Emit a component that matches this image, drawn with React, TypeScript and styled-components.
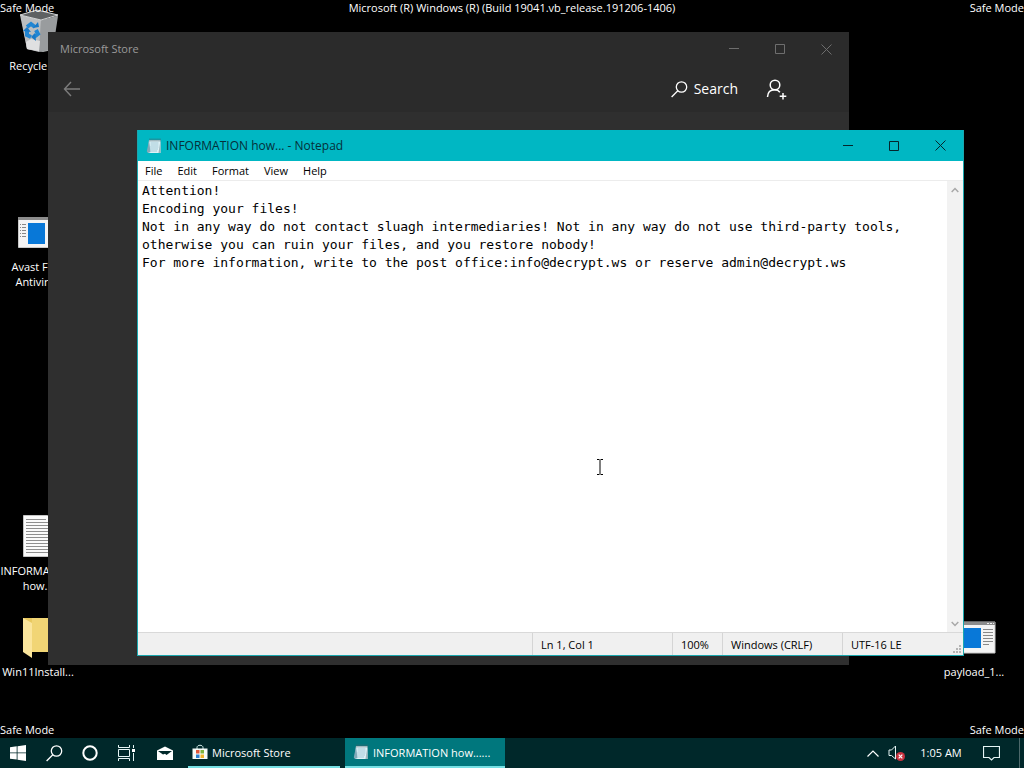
import React from "react";
import styled, { createGlobalStyle, css } from "styled-components";

const GlobalStyle = createGlobalStyle`
  *, *::before, *::after { box-sizing: border-box; }
  body { margin: 0; background: #000; }
  body, button, textarea { font-family: "Open Sans", "Noto Sans", sans-serif; font-size: 11px; }
  button { border: 0; padding: 0; margin: 0; background: none; color: inherit; }
  svg { display: block; flex: none; }
`;

const Screen = styled.div`
  display: flex;
  flex-direction: column;
  height: 100vh;
  min-height: 480px;
  overflow: hidden;
  background: #000;
  color: #fff;
`;

const Desktop = styled.main`
  position: relative;
  flex: 1;
  min-height: 0;
  overflow: hidden;
`;

type Corner = "topLeft" | "topCenter" | "topRight" | "bottomLeft" | "bottomRight";

const corners = {
  topLeft: css`top: 0; left: 0;`,
  topCenter: css`top: 0; left: 0; right: 0; text-align: center;`,
  topRight: css`top: 0; right: 0;`,
  bottomLeft: css`bottom: 0; left: 0;`,
  bottomRight: css`bottom: 0; right: 0;`,
};

const Watermark = styled.div<{ $at: Corner }>`
  position: absolute;
  ${({ $at }) => corners[$at]}
  font-size: 11px;
  line-height: 16px;
  white-space: nowrap;
  pointer-events: none;
`;

const Shortcut = styled.button<{ $top: number; $side: "left" | "right" }>`
  position: absolute;
  top: ${({ $top }) => $top}px;
  ${({ $side }) => ($side === "left" ? "left: 0;" : "right: 12px;")}
  width: 76px;
  display: flex;
  flex-direction: column;
  align-items: center;
  gap: 3px;
  line-height: 15px;
  text-align: center;
`;

const AppWindow = styled.section`
  position: absolute;
  display: flex;
  flex-direction: column;
`;

const StoreWindow = styled(AppWindow)`
  top: 32px;
  left: 48px;
  right: 175px;
  bottom: 73px;
  background: #2f2f2f;
`;

const NotepadWindow = styled(AppWindow)`
  top: 130px;
  left: 137px;
  right: 60px;
  bottom: 82px;
  background: #fff;
  color: #000;
  border: 1px solid #1aa7ae;
  border-top: 0;
`;

const TitleBar = styled.header<{ $tone: "store" | "notepad" }>`
  flex: none;
  display: flex;
  align-items: center;
  height: ${({ $tone }) => ($tone === "store" ? 34 : 31)}px;
  padding-left: ${({ $tone }) => ($tone === "store" ? 12 : 8)}px;
  background: ${({ $tone }) => ($tone === "store" ? "#2b2b2b" : "#00b7c3")};
  color: ${({ $tone }) => ($tone === "store" ? "#9a9a9a" : "#05303a")};
  font-size: ${({ $tone }) => ($tone === "store" ? 11 : 12)}px;
`;

const Title = styled.h1`
  flex: 1;
  min-width: 0;
  margin: 0;
  font-size: inherit;
  font-weight: 400;
  line-height: 16px;
  white-space: nowrap;

  svg + & { margin-left: 4px; }
`;

const CaptionButton = styled.button<{ $dim?: boolean }>`
  width: 46px;
  height: 100%;
  display: flex;
  align-items: center;
  justify-content: center;
  color: ${({ $dim }) => ($dim ? "#6e6e6e" : "#04262c")};
`;

const StoreBar = styled.nav`
  flex: none;
  display: flex;
  align-items: center;
  height: 46px;
  padding: 0 62px 0 15px;
  background: #2b2b2b;
`;

const BackButton = styled.button`
  margin-right: auto;
  color: #7c7c7c;
`;

const SearchButton = styled.button`
  display: flex;
  align-items: center;
  gap: 6px;
  margin-right: 28px;
  font-size: 14px;
  line-height: 20px;
`;

const MenuBar = styled.nav`
  flex: none;
  display: flex;
  height: 20px;
  border-bottom: 1px solid #ececec;
`;

const MenuItem = styled.button`
  padding: 0 8px 0 7px;
  font-size: 11px;
  line-height: 18px;
`;

const Editor = styled.div`
  flex: 1;
  min-height: 0;
  display: flex;
`;

const TextArea = styled.textarea`
  flex: 1;
  min-width: 0;
  margin: 0;
  padding: 1px 4px;
  border: 0;
  outline: 0;
  resize: none;
  overflow: hidden;
  background: #fff;
  color: #000;
  font-family: "DejaVu Sans Mono", monospace;
  font-size: 13px;
  line-height: 18px;
  cursor: text;
`;

const ScrollTrack = styled.div`
  width: 16px;
  display: flex;
  flex-direction: column;
  justify-content: space-between;
  background: #f2f2f2;
  color: #a8a8a8;
`;

const ScrollButton = styled.button`
  height: 17px;
  display: flex;
  align-items: center;
  justify-content: center;
`;

const StatusBar = styled.footer`
  position: relative;
  flex: none;
  display: flex;
  justify-content: flex-end;
  height: 23px;
  border-top: 1px solid #d9d9d9;
  background: #f0f0f0;
`;

const StatusCell = styled.span<{ $width: number }>`
  width: ${({ $width }) => $width}px;
  padding-left: 8px;
  border-left: 1px solid #d5d5d5;
  line-height: 23px;
  white-space: nowrap;
`;

const ResizeGrip = styled.svg`
  position: absolute;
  right: 1px;
  bottom: 1px;
`;

const Pointer = styled.svg`
  position: absolute;
  left: 596px;
  top: 459px;
  pointer-events: none;
`;

const Taskbar = styled.footer`
  flex: none;
  display: flex;
  height: 30px;
  background: #00282a;
`;

const TaskIcon = styled.button<{ $width?: number }>`
  width: ${({ $width = 36 }) => $width}px;
  display: flex;
  align-items: center;
  justify-content: center;
`;

const RunningApps = styled.div`
  display: flex;
  gap: 5px;
  margin: 0 auto 0 2px;
`;

const TaskButton = styled.button<{ $active?: boolean }>`
  width: ${({ $active }) => ($active ? 160 : 152)}px;
  display: flex;
  align-items: center;
  gap: 4px;
  padding-left: ${({ $active }) => ($active ? 8 : 4)}px;
  border-bottom: 2px solid #76e0e4;
  background: ${({ $active }) => ($active ? "#00777d" : "transparent")};
  white-space: nowrap;
`;

const Clock = styled.time`
  width: 64px;
  line-height: 30px;
  text-align: center;
`;

const ShowDesktop = styled.button`
  width: 5px;
  margin-left: 10px;
  border-left: 1px solid #4d686a;
`;

const MinimizeGlyph = () => (
  <svg width="10" height="10" viewBox="0 0 10 10"><path d="M0 4.5h10" stroke="currentColor" /></svg>
);
const MaximizeGlyph = () => (
  <svg width="10" height="10" viewBox="0 0 10 10"><path d="M.5.5h9v9h-9z" fill="none" stroke="currentColor" /></svg>
);
const CloseGlyph = () => (
  <svg width="11" height="11" viewBox="0 0 11 11"><path d="M.5.5l10 10M10.5.5l-10 10" stroke="currentColor" /></svg>
);

function CaptionButtons({ dim }: { dim?: boolean }) {
  return (
    <>
      <CaptionButton $dim={dim} aria-label="Minimize"><MinimizeGlyph /></CaptionButton>
      <CaptionButton $dim={dim} aria-label="Maximize"><MaximizeGlyph /></CaptionButton>
      <CaptionButton $dim={dim} aria-label="Close"><CloseGlyph /></CaptionButton>
    </>
  );
}

const Magnifier = () => (
  <svg width="17" height="17" viewBox="0 0 17 17" fill="none" stroke="currentColor" strokeWidth="1.3">
    <circle cx="10.5" cy="6" r="5.2" /><path d="M6.8 9.8L.6 16" />
  </svg>
);

const NotepadIcon = () => (
  <svg width="16" height="16" viewBox="0 0 16 16">
    <path d="M3 2h11.5v13H2z" fill="#dff2f7" />
    <path d="M3 2L.8 13.500 2 15 4.500 14z" fill="#7fa9b8" />
    <path d="M12.500 15h2V2z" fill="#9fb6bd" />
    <path d="M4.500 5h8M4.500 7h8M4 9h8.500M4 11h8M4 13h7" stroke="#a3c9d6" />
    <path d="M4 .5v3M6 .5v3M8 .5v3M10 .5v3M12 .5v3M14 .5v3" stroke="#45636d" strokeWidth=".8" />
  </svg>
);

const RecycleBinIcon = () => (
  <svg width="48" height="48" viewBox="0 0 48 48">
    <path d="M7 9l6 33 16 3 9-2 5-34-15 5z" fill="#a9acad" />
    <path d="M6 8l21 5-2 32-12-3z" fill="#bcbec0" />
    <path d="M27 13l17-4-5 33-14 3z" fill="#999c9e" />
    <path d="M6 8l17-5 21 5-17 5z" fill="#5e6163" stroke="#d5d7d8" />
    <path d="M12 35l5-3 9 2-1 10-12-2z" fill="#dfe0e1" />
    <g fill="none" stroke="#2286d3" strokeWidth="4">
      <path d="M13 20l4-3 4 3" /><path d="M22 23l2 4-4 3" /><path d="M17 30l-4-2 0-4" />
    </g>
    <path d="M19 21l6-1-1-5zM21 26l-4 4 5 4zM9 24l4-4 4 5z" fill="#1979c7" />
  </svg>
);

const ProgramIcon = ({ flipped }: { flipped?: boolean }) => (
  <svg width="48" height="48" viewBox="0 0 48 48">
    {flipped ? (
      <>
        <path d="M5 9h40v31H5z" fill="#f4f4f4" stroke="#c9c9c9" />
        <path d="M5 9h40v3H5z" fill="#8c8c8c" />
        <path d="M37 10.500h2M40 10.500h2M43 10.500h1" stroke="#eee" />
        <path d="M11 15h20v20H11z" fill="#0878d8" />
        <path d="M33 16.500h10M33 19.500h10M33 22.500h10M33 25.500h10M33 28.500h10M33 31.500h6" stroke="#888" />
      </>
    ) : (
      <>
        <path d="M4.500 9.500h40v30h-40z" fill="#f4f4f4" stroke="#c9c9c9" />
        <path d="M4 9h41v3H4z" fill="#8c8c8c" />
        <path d="M14 15h17v21H14z" fill="#0878d8" />
        <path d="M6 16.500h6M6 19.500h6M6 22.500h6M6 25.500h6M6 28.500h6" stroke="#888" strokeDasharray="1 1 4 0" />
      </>
    )}
  </svg>
);

const DocumentIcon = () => (
  <svg width="48" height="48" viewBox="0 0 48 48">
    <path d="M9.500 3.500h24l6 6v35h-30z" fill="#fbfbfb" stroke="#c4c4c4" />
    <path
      d="M12 7.500h20M12 10.500h24M12 13.500h24M12 16.500h24M12 19.500h24M12 22.500h24M12 25.500h24M12 28.500h24M12 31.500h24M12 34.500h24M12 37.500h24M12 40.500h24"
      stroke="#8f8f8f"
    />
  </svg>
);

const FolderIcon = () => (
  <svg width="48" height="48" viewBox="0 0 48 48">
    <path d="M9 5h30v34H9z" fill="#e9c95f" />
    <path d="M18 5h21v34H18z" fill="#f1d575" />
    <path d="M9 5l9 5v35l-9-6z" fill="#fbe59c" />
  </svg>
);

const StoreIcon = () => (
  <svg width="16" height="16" viewBox="0 0 16 16">
    <path d="M5 5V3.500C5 .500 11 .500 11 3.500V5" fill="none" stroke="#d7f0ee" />
    <path d="M.5 4.500h15V15H.5z" fill="#f5fbf8" />
    <path d="M4 6h3.500v3.500H4z" fill="#e0563b" />
    <path d="M8.500 6H12v3.500H8.500z" fill="#7fb43c" />
    <path d="M4 10.500h3.500V14H4z" fill="#2d7fd0" />
    <path d="M8.500 10.500H12V14H8.500z" fill="#efb52c" />
  </svg>
);

const menus = ["File", "Edit", "Format", "View", "Help"];

const note = [
  "Attention!",
  "Encoding your files!",
  "Not in any way do not contact sluagh intermediaries! Not in any way do not use third-party tools, otherwise you can ruin your files, and you restore nobody!",
  "For more information, write to the post office:info@decrypt.ws or reserve admin@decrypt.ws",
].join("\n");

export default function App() {
  return (
    <>
      <GlobalStyle />
      <Screen>
        <Desktop>
          <Shortcut $top={7} $side="left"><RecycleBinIcon />Recycle Bin</Shortcut>
          <Shortcut $top={208} $side="left"><ProgramIcon />Avast Free Antivirus</Shortcut>
          <Shortcut $top={512} $side="left"><DocumentIcon />INFORMATION how...</Shortcut>
          <Shortcut $top={613} $side="left"><FolderIcon />Win11Install...</Shortcut>
          <Shortcut $top={613} $side="right"><ProgramIcon flipped />payload_1...</Shortcut>

          <Watermark $at="topLeft">Safe Mode</Watermark>
          <Watermark $at="topCenter">Microsoft (R) Windows (R) (Build 19041.vb_release.191206-1406)</Watermark>
          <Watermark $at="topRight">Safe Mode</Watermark>
          <Watermark $at="bottomLeft">Safe Mode</Watermark>
          <Watermark $at="bottomRight">Safe Mode</Watermark>

          <StoreWindow aria-label="Microsoft Store">
            <TitleBar $tone="store">
              <Title>Microsoft Store</Title>
              <CaptionButtons dim />
            </TitleBar>
            <StoreBar>
              <BackButton aria-label="Back">
                <svg width="18" height="16" viewBox="0 0 18 16" fill="none" stroke="currentColor" strokeWidth="1.4">
                  <path d="M17 8H1.500M8 1L1.500 8 8 15" />
                </svg>
              </BackButton>
              <SearchButton><Magnifier />Search</SearchButton>
              <button aria-label="Sign in">
                <svg width="21" height="21" viewBox="0 0 21 21" fill="none" stroke="#fff" strokeWidth="1.5">
                  <circle cx="9" cy="6" r="4.800" />
                  <path d="M1.500 18c.2-4.500 3-7.200 7.200-7.200 2.300 0 4 .8 5.200 2.400M17 14v6.500M13.700 17.300h6.600" />
                </svg>
              </button>
            </StoreBar>
          </StoreWindow>

          <NotepadWindow aria-label="Notepad">
            <TitleBar $tone="notepad">
              <NotepadIcon />
              <Title>INFORMATION how... - Notepad</Title>
              <CaptionButtons />
            </TitleBar>
            <MenuBar>
              {menus.map((name) => <MenuItem key={name}>{name}</MenuItem>)}
            </MenuBar>
            <Editor>
              <TextArea aria-label="Text editor" spellCheck={false} defaultValue={note} />
              <ScrollTrack>
                <ScrollButton aria-label="Scroll up">
                  <svg width="8" height="6" viewBox="0 0 8 6"><path d="M.7 5L4 1.500 7.300 5" fill="none" stroke="currentColor" strokeWidth="1.500" /></svg>
                </ScrollButton>
                <ScrollButton aria-label="Scroll down">
                  <svg width="8" height="6" viewBox="0 0 8 6"><path d="M.7 1L4 4.500 7.300 1" fill="none" stroke="currentColor" strokeWidth="1.500" /></svg>
                </ScrollButton>
              </ScrollTrack>
            </Editor>
            <StatusBar>
              <StatusCell $width={140}>Ln 1, Col 1</StatusCell>
              <StatusCell $width={50}>100%</StatusCell>
              <StatusCell $width={120}>Windows (CRLF)</StatusCell>
              <StatusCell $width={121}>UTF-16 LE</StatusCell>
              <ResizeGrip width="9" height="9" viewBox="0 0 9 9">
                <path d="M6 0h2v2H6zM3 3h2v2H3zM6 3h2v2H6zM0 6h2v2H0zM3 6h2v2H3zM6 6h2v2H6z" fill="#b4b4b4" />
              </ResizeGrip>
            </StatusBar>
          </NotepadWindow>

          <Pointer width="8" height="16" viewBox="0 0 8 16">
            <path d="M1 .5h2.500M4.500 .5H7M4 1v14M1 15.500h2.500M4.500 15.500H7" stroke="#000" />
          </Pointer>
        </Desktop>

        <Taskbar>
          <TaskIcon aria-label="Start">
            <svg width="16" height="16" viewBox="0 0 16 16">
              <path d="M0 2.300L6.700 1.300v6.200H0zM7.500 1.200L16 0v7.500H7.500zM0 8.300h6.700v6.300L0 13.700zM7.500 8.300H16V16l-8.500-1.200z" fill="#fff" />
            </svg>
          </TaskIcon>
          <TaskIcon aria-label="Search"><Magnifier /></TaskIcon>
          <TaskIcon aria-label="Cortana">
            <svg width="16" height="16" viewBox="0 0 16 16"><circle cx="8" cy="8" r="6.700" fill="none" stroke="#fff" strokeWidth="2" /></svg>
          </TaskIcon>
          <TaskIcon aria-label="Task View">
            <svg width="17" height="16" viewBox="0 0 17 16" fill="none" stroke="#e6f5f5">
              <path d="M.5 0v2.500h11V0M.5 16v-2.500h11V16M.5 4.500h11v7H.5zM15.500 0v3M15.500 8v8" />
              <path d="M14 4h3v3h-3z" fill="#fff" stroke="none" />
            </svg>
          </TaskIcon>
          <TaskIcon $width={42} aria-label="Mail">
            <svg width="16" height="14" viewBox="0 0 16 14">
              <path d="M0 4.500L8 .5l8 4V14H0z" fill="#fff" />
              <path d="M1 5h14L9.500 9 8 7.800 6 8.500z" fill="#00282a" />
            </svg>
          </TaskIcon>
          <RunningApps>
            <TaskButton><StoreIcon />Microsoft Store</TaskButton>
            <TaskButton $active><NotepadIcon />INFORMATION how......</TaskButton>
          </RunningApps>
          <TaskIcon $width={24} aria-label="Show hidden icons">
            <svg width="12" height="7" viewBox="0 0 12 7"><path d="M.5 6.500L6 1l5.500 5.500" fill="none" stroke="#fff" strokeWidth="1.200" /></svg>
          </TaskIcon>
          <TaskIcon $width={24} aria-label="Volume">
            <svg width="18" height="16" viewBox="0 0 18 16">
              <path d="M1 5h2.500L7.500 1v13L3.500 10.500H1z" fill="none" stroke="#e6f5f5" />
              <circle cx="12.500" cy="11.500" r="4.500" fill="#c8323f" />
              <path d="M10.700 9.700l3.600 3.600M14.300 9.700l-3.600 3.600" stroke="#fff" strokeWidth="1.200" />
            </svg>
          </TaskIcon>
          <Clock>1:05 AM</Clock>
          <TaskIcon aria-label="Notifications">
            <svg width="17" height="16" viewBox="0 0 17 16"><path d="M.5 1.500h16v11h-5.500L8.500 15 6 12.500H.5z" fill="none" stroke="#e6f5f5" strokeWidth="1.200" /></svg>
          </TaskIcon>
          <ShowDesktop aria-label="Show desktop" />
        </Taskbar>
      </Screen>
    </>
  );
}
